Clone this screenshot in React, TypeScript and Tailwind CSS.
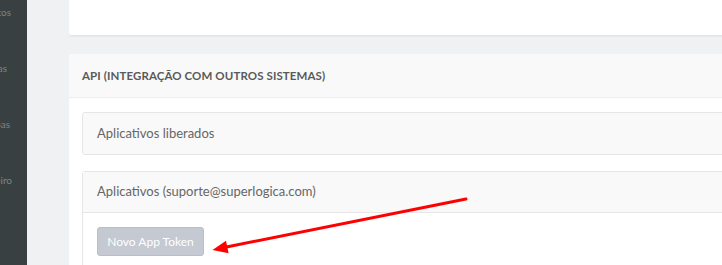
import React from 'react'

const sideItems = [
  { label: 'Contratos', top: 'mt-[5px]', pr: 'pr-[16px]' },
  { label: 'Empresas', top: 'mt-[42px]', pr: 'pr-[20px]' },
  { label: 'Pessoas', top: 'mt-[42px]', pr: 'pr-[17px]' },
  { label: 'Financeiro', top: 'mt-[42px]', pr: 'pr-[15px]' },
]

function Sidebar() {
  return (
    <aside className="w-[27px] shrink-0 h-full bg-[#394041] overflow-hidden flex flex-col">
      {sideItems.map((item) => (
        <div key={item.label} className={`${item.top} ${item.pr} h-[14px] flex justify-end`}>
          <span className="whitespace-nowrap text-[10px] leading-[14px] text-[#7d8485]">{item.label}</span>
        </div>
      ))}
    </aside>
  )
}

function Arrow() {
  return (
    <svg className="absolute inset-0 pointer-events-none" width="722" height="265" viewBox="0 0 722 265">
      <line x1="466" y1="199" x2="224" y2="247.5" stroke="#f00" strokeWidth="3" strokeLinecap="round" />
      <polygon points="212.5,250 226,240.8 228.6,253.3" fill="#f00" />
    </svg>
  )
}

export default function App() {
  return (
    <div className="relative w-[722px] h-[265px] overflow-hidden flex bg-[#f0f1f3] font-['Lato','Open_Sans',sans-serif]">
      <Sidebar />
      <main className="flex-1 pl-[42px] flex flex-col gap-[18px]">
        <div className="shrink-0 w-[700px] h-[36px] bg-white rounded-bl-[3px] border-b border-[#e3e5e8] shadow-[0_1px_1px_rgba(0,0,0,0.03)]" />

        <section className="w-[700px] flex-1 bg-white rounded-tl-[3px]">
          <header className="h-[44px] bg-[#f9f9f9] border-b border-[#eceef0] flex items-center pl-[13px] rounded-tl-[3px]">
            <h2 className="text-[11.5px] font-bold uppercase text-[#5a5a5a] tracking-[0.1px]">API (Integração com outros sistemas)</h2>
          </header>

          <div className="pt-[14px] pl-[13px] flex flex-col gap-[16px]">
            <div className="h-[43px] bg-[#f9f9f9] border border-[#e6e6e6] rounded-l-[3px] flex items-center pl-[14px]">
              <span className="text-[13px] text-[#666]">Aplicativos liberados</span>
            </div>

            <div className="border border-[#e6e6e6] rounded-l-[3px] h-[120px]">
              <div className="h-[41px] bg-[#f9f9f9] border-b border-[#e6e6e6] flex items-center pl-[14px]">
                <span className="text-[13px] text-[#666]">Aplicativos (suporte@superlogica.com)</span>
              </div>
              <div className="pt-[14px] pl-[14px]">
                <button className="w-[107px] h-[29px] rounded-[3px] bg-[#c5c9d2] border border-[#b9bec8] text-white text-[12px] flex items-center justify-center">
                  Novo App Token
                </button>
              </div>
            </div>
          </div>
        </section>
      </main>
      <Arrow />
    </div>
  )
}
